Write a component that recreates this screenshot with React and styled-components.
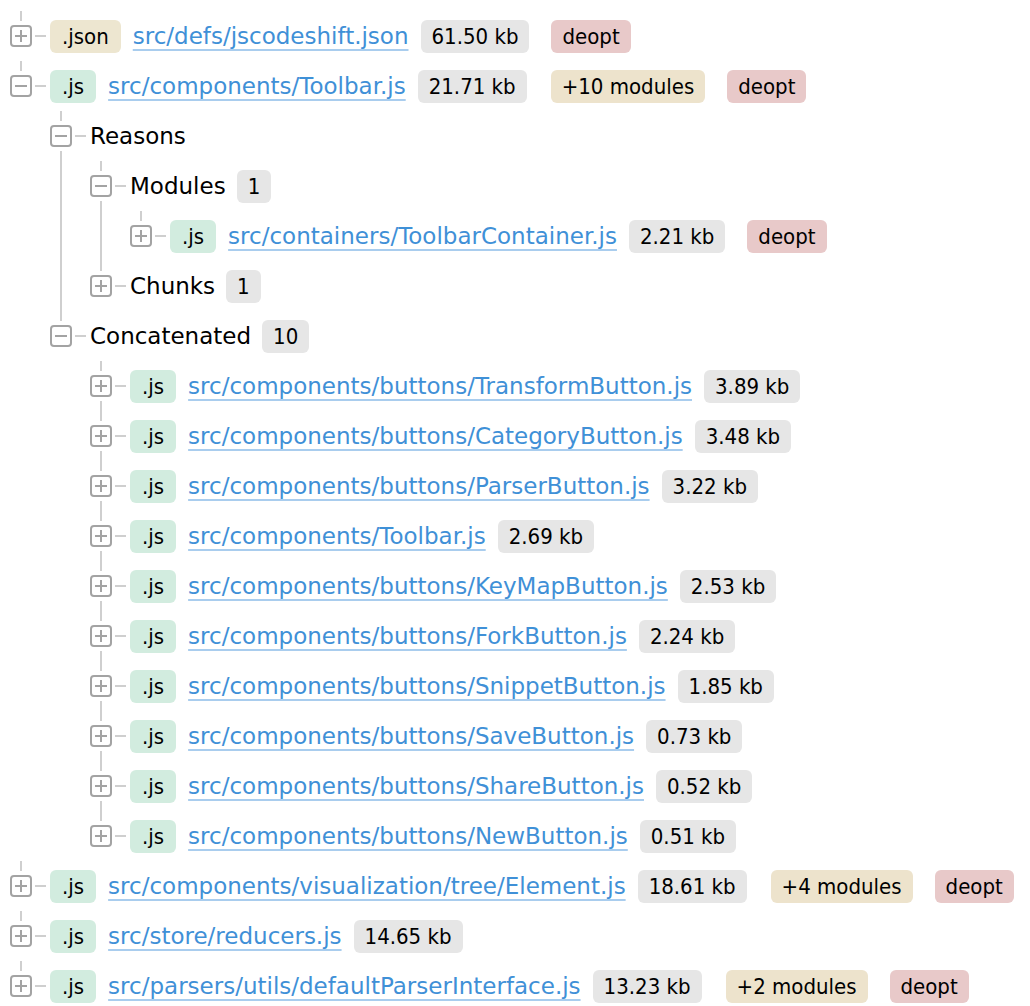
import React from "react";
import styled, { createGlobalStyle, css } from "styled-components";

const GlobalStyle = createGlobalStyle`
  html, body {
    margin: 0;
    padding: 0;
    background: #fff;
  }
  body {
    font-family: "DejaVu Sans", Verdana, sans-serif;
    font-size: 23px;
    color: #000;
  }
`;

const LINE = "#cfcfcf";

const Page = styled.div`
  padding-top: 11px;
  overflow: hidden;
`;

const TreeList = styled.ul`
  list-style: none;
  margin: 0;
  padding: 0 0 0 ${(props) => (props.$root ? 10 : 40)}px;
`;

const Item = styled.li`
  position: relative;

  &::before {
    content: "";
    position: absolute;
    left: 10px;
    top: 0;
    width: 2px;
    height: 10px;
    background: ${LINE};
  }

  ${(props) =>
    props.$connectDown &&
    css`
      &::after {
        content: "";
        position: absolute;
        left: 10px;
        top: 40px;
        bottom: 0;
        width: 2px;
        background: ${LINE};
      }
    `}
`;

const Row = styled.div`
  display: flex;
  align-items: center;
  height: 50px;
  white-space: nowrap;
`;

const Toggle = styled.span`
  position: relative;
  flex: none;
  box-sizing: border-box;
  width: 22px;
  height: 22px;
  border: 2px solid #a3a3a3;
  border-radius: 4px;

  &::before {
    content: "";
    position: absolute;
    left: 3px;
    top: 8px;
    width: 12px;
    height: 2px;
    background: #a3a3a3;
  }

  ${(props) =>
    !props.$open &&
    css`
      &::after {
        content: "";
        position: absolute;
        left: 8px;
        top: 3px;
        width: 2px;
        height: 12px;
        background: #a3a3a3;
      }
    `}
`;

const Connector = styled.span`
  flex: none;
  width: 11px;
  height: 2px;
  margin: 0 4px 0 3px;
  background: ${LINE};
`;

const tagColors = {
  json: "#ede6d0",
  js: "#d2ecdf",
  size: "#e6e6e6",
  modules: "#ede3cc",
  deopt: "#e8c9c9",
};

const Tag = styled.span`
  flex: none;
  height: 33px;
  line-height: 33px;
  padding: 0 ${(props) => (props.$kind === "json" || props.$kind === "js" ? 12 : 11)}px;
  border-radius: 6px;
  background: ${(props) => tagColors[props.$kind] || tagColors.size};
  margin-left: ${(props) => props.$gap || 0}px;
  font-family: "DejaVu Sans Condensed", "DejaVu Sans", sans-serif;
  font-stretch: condensed;
  font-size: 22px;
`;

const FileLink = styled.a`
  margin-left: 12px;
  color: #3f90d7;
  text-decoration: underline;
  text-decoration-color: #a9cdee;
  text-decoration-thickness: 2px;
  text-underline-offset: 5px;
  cursor: pointer;
`;

const Label = styled.span`
  margin-right: 11px;
`;

function FileRow({ ext, path, size, modules, deopt }) {
  const kind = ext === ".json" ? "json" : "js";
  return (
    <>
      <Tag $kind={kind}>{ext}</Tag>
      <FileLink>{path}</FileLink>
      <Tag $kind="size" $gap={12}>
        {size}
      </Tag>
      {modules && (
        <Tag $kind="modules" $gap={24}>
          {modules}
        </Tag>
      )}
      {deopt && (
        <Tag $kind="deopt" $gap={22}>
          deopt
        </Tag>
      )}
    </>
  );
}

function Node({ node, connectDown }) {
  const open = !!node.children;
  return (
    <Item $connectDown={connectDown}>
      <Row>
        <Toggle $open={open} />
        <Connector />
        {node.label ? (
          <>
            <Label>{node.label}</Label>
            {node.count != null && <Tag $kind="size">{node.count}</Tag>}
          </>
        ) : (
          <FileRow {...node} />
        )}
      </Row>
      {open && <Tree nodes={node.children} />}
    </Item>
  );
}

function Tree({ nodes, root }) {
  return (
    <TreeList $root={root}>
      {nodes.map((node, i) => (
        <Node
          key={node.path || node.label}
          node={node}
          connectDown={!root && i < nodes.length - 1}
        />
      ))}
    </TreeList>
  );
}

const concatenated = [
  ["src/components/buttons/TransformButton.js", "3.89 kb"],
  ["src/components/buttons/CategoryButton.js", "3.48 kb"],
  ["src/components/buttons/ParserButton.js", "3.22 kb"],
  ["src/components/Toolbar.js", "2.69 kb"],
  ["src/components/buttons/KeyMapButton.js", "2.53 kb"],
  ["src/components/buttons/ForkButton.js", "2.24 kb"],
  ["src/components/buttons/SnippetButton.js", "1.85 kb"],
  ["src/components/buttons/SaveButton.js", "0.73 kb"],
  ["src/components/buttons/ShareButton.js", "0.52 kb"],
  ["src/components/buttons/NewButton.js", "0.51 kb"],
].map(([path, size]) => ({ ext: ".js", path, size }));

const data = [
  {
    ext: ".json",
    path: "src/defs/jscodeshift.json",
    size: "61.50 kb",
    deopt: true,
  },
  {
    ext: ".js",
    path: "src/components/Toolbar.js",
    size: "21.71 kb",
    modules: "+10 modules",
    deopt: true,
    children: [
      {
        label: "Reasons",
        children: [
          {
            label: "Modules",
            count: 1,
            children: [
              {
                ext: ".js",
                path: "src/containers/ToolbarContainer.js",
                size: "2.21 kb",
                deopt: true,
              },
            ],
          },
          { label: "Chunks", count: 1 },
        ],
      },
      {
        label: "Concatenated",
        count: 10,
        children: concatenated,
      },
    ],
  },
  {
    ext: ".js",
    path: "src/components/visualization/tree/Element.js",
    size: "18.61 kb",
    modules: "+4 modules",
    deopt: true,
  },
  {
    ext: ".js",
    path: "src/store/reducers.js",
    size: "14.65 kb",
  },
  {
    ext: ".js",
    path: "src/parsers/utils/defaultParserInterface.js",
    size: "13.23 kb",
    modules: "+2 modules",
    deopt: true,
  },
];

export default function App() {
  return (
    <Page>
      <GlobalStyle />
      <Tree nodes={data} root />
    </Page>
  );
}
